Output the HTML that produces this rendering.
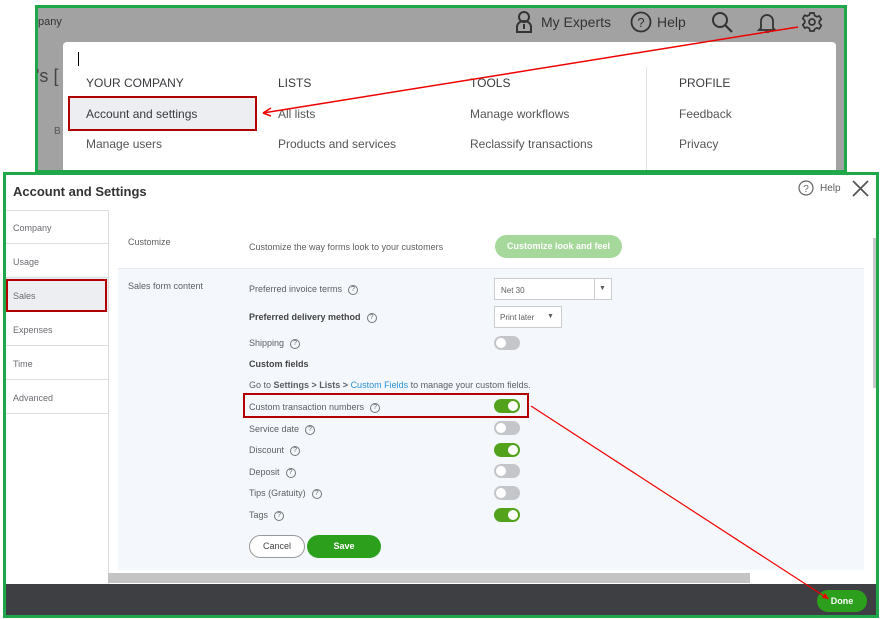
<!DOCTYPE html>
<html><head><meta charset="utf-8">
<style>
*{margin:0;padding:0;box-sizing:border-box}
body{width:881px;height:619px;background:#fff;position:relative;overflow:hidden;font-family:"Liberation Sans",sans-serif;color:#393a3d}
.a{position:absolute}
.t{font-size:12px;color:#555;white-space:nowrap}
.s{font-size:9px;color:#5d5e60;white-space:nowrap}
.q{display:inline-block;width:10px;height:10px;border:1px solid #777;border-radius:50%;font-size:7px;line-height:8px;text-align:center;color:#666;margin-left:6px;vertical-align:middle}
.tg{position:absolute;width:26px;height:14px;border-radius:7px;background:#c5c6c9}
.tg::after{content:"";position:absolute;top:2px;left:2px;width:10px;height:10px;border-radius:50%;background:#fff}
.tg.on{background:#52a21c}
.tg.on::after{left:14px}
.nav{position:absolute;left:6px;width:102px;height:34px;border-bottom:1px solid #ddd;font-size:9px;color:#6b6c72;padding:13px 0 0 7px}
</style></head><body>
<!-- top screenshot -->
<div class="a" style="left:35px;top:5px;width:812px;height:168px;background:#a2a2a2;border:3px solid #1fa84a"></div>
<div class="a t" style="left:38px;top:16px;color:#333;font-size:11px">pany</div>
<div class="a" style="left:36px;top:66px;font-size:18px;color:#444">'s [</div>
<div class="a" style="left:54px;top:126px;font-size:10px;color:#555">B</div>
<svg class="a" style="left:514px;top:10px" width="20" height="24" viewBox="0 0 20 24"><circle cx="10" cy="7" r="5" fill="none" stroke="#333" stroke-width="2"/><path d="M3 22v-5a7 6 0 0 1 14 0v5z" fill="none" stroke="#333" stroke-width="2"/><path d="M10 14v5" stroke="#333" stroke-width="2"/></svg>
<div class="a" style="left:541px;top:14px;font-size:14px;color:#333">My Experts</div>
<svg class="a" style="left:630px;top:11px" width="22" height="22"><circle cx="11" cy="11" r="9.5" fill="none" stroke="#333" stroke-width="1.8"/><text x="11" y="16" font-size="13" text-anchor="middle" fill="#333" font-family="Liberation Sans">?</text></svg>
<div class="a" style="left:657px;top:14px;font-size:14px;color:#333">Help</div>
<svg class="a" style="left:711px;top:11px" width="24" height="24"><circle cx="9" cy="9" r="7" fill="none" stroke="#333" stroke-width="2"/><path d="M14 14l7 7" stroke="#333" stroke-width="2.2"/></svg>
<svg class="a" style="left:757px;top:10px" width="20" height="24"><path d="M4 18V11a6 6 0 0 1 12 0v7l2 2H2z" fill="none" stroke="#333" stroke-width="1.8"/><path d="M8 22h4" stroke="#333" stroke-width="1.8"/></svg>
<svg class="a" style="left:801px;top:11px" width="22" height="22" viewBox="0 0 22 22"><path d="M9 2h4l.6 2.6 2.2 1.2 2.5-.9 2 3.4-2 1.8v2.5l2 1.8-2 3.4-2.5-.9-2.2 1.2L13 20H9l-.6-2.6-2.2-1.2-2.5.9-2-3.4 2-1.8V9.4l-2-1.8 2-3.4 2.5.9 2.2-1.2z" fill="none" stroke="#333" stroke-width="1.7" stroke-linejoin="round"/><circle cx="11" cy="11" r="3" fill="none" stroke="#333" stroke-width="1.7"/></svg>
<div class="a" style="left:63px;top:42px;width:773px;height:128px;background:#fff;border-radius:4px 4px 0 0"></div>
<div class="a" style="left:78px;top:52px;width:1px;height:14px;background:#000"></div>
<div class="a" style="left:646px;top:67px;width:1px;height:103px;background:#e3e3e3"></div>
<div class="a t" style="left:86px;top:76px;color:#393a3d">YOUR COMPANY</div>
<div class="a t" style="left:278px;top:76px;color:#393a3d">LISTS</div>
<div class="a t" style="left:470px;top:76px;color:#393a3d">TOOLS</div>
<div class="a t" style="left:679px;top:76px;color:#393a3d">PROFILE</div>
<div class="a" style="left:68px;top:97px;width:188px;height:33px;background:#eceef1"></div>
<div class="a t" style="left:86px;top:107px;color:#393a3d">Account and settings</div>
<div class="a t" style="left:278px;top:107px">All lists</div>
<div class="a t" style="left:470px;top:107px">Manage workflows</div>
<div class="a t" style="left:679px;top:107px">Feedback</div>
<div class="a t" style="left:86px;top:137px">Manage users</div>
<div class="a t" style="left:278px;top:137px">Products and services</div>
<div class="a t" style="left:470px;top:137px">Reclassify transactions</div>
<div class="a t" style="left:679px;top:137px">Privacy</div>
<div class="a" style="left:68px;top:96px;width:189px;height:35px;border:2px solid #b00000"></div>

<!-- bottom modal -->
<div class="a" style="left:3px;top:172px;width:876px;height:446px;background:#fff;border:3px solid #1fa84a"></div>
<div class="a" style="left:13px;top:184px;font-size:13px;font-weight:bold;color:#333">Account and Settings</div>
<svg class="a" style="left:798px;top:180px" width="16" height="16"><circle cx="8" cy="8" r="7" fill="none" stroke="#666" stroke-width="1.2"/><text x="8" y="12" font-size="10" text-anchor="middle" fill="#666" font-family="Liberation Sans">?</text></svg>
<div class="a s" style="left:820px;top:183px;font-size:10px">Help</div>
<svg class="a" style="left:852px;top:180px" width="17" height="17"><path d="M1 1l15 15M16 1L1 16" stroke="#555" stroke-width="1.8"/></svg>
<div class="a" style="left:6px;top:210px;width:102px;height:1px;background:#ddd"></div>
<div class="nav" style="top:210px">Company</div>
<div class="nav" style="top:244px">Usage</div>
<div class="nav" style="top:278px;background:#eceef1">Sales</div>
<div class="nav" style="top:312px">Expenses</div>
<div class="nav" style="top:346px">Time</div>
<div class="nav" style="top:380px">Advanced</div>
<div class="a" style="left:108px;top:210px;width:1px;height:374px;background:#ddd"></div>
<div class="a" style="left:6px;top:279px;width:101px;height:33px;border:2px solid #b00000"></div>

<div class="a s" style="left:128px;top:237px">Customize</div>
<div class="a s" style="left:249px;top:242px">Customize the way forms look to your customers</div>
<div class="a" style="left:495px;top:235px;width:127px;height:23px;border-radius:12px;background:#a5d89a;color:#fff;font-size:9px;font-weight:bold;text-align:center;line-height:23px">Customize look and feel</div>
<div class="a" style="left:118px;top:268px;width:746px;height:302px;background:#f4f8fc;border-top:1px solid #e1e8ef"></div>
<div class="a s" style="left:128px;top:281px">Sales form content</div>
<div class="a s" style="left:249px;top:284px">Preferred invoice terms<span class="q">?</span></div>
<div class="a" style="left:494px;top:278px;width:118px;height:22px;background:#fff;border:1px solid #ccc"></div>
<div class="a" style="left:594px;top:279px;width:1px;height:20px;background:#ccc"></div>
<div class="a s" style="left:501px;top:286px;font-size:8px">Net 30</div>
<div class="a s" style="left:599px;top:285px;font-size:7px">▼</div>
<div class="a s" style="left:249px;top:312px;font-weight:bold;color:#444">Preferred delivery method<span class="q" style="font-weight:normal">?</span></div>
<div class="a" style="left:494px;top:306px;width:68px;height:22px;background:#fff;border:1px solid #ccc"></div>
<div class="a s" style="left:500px;top:313px;font-size:8px">Print later</div>
<div class="a s" style="left:547px;top:313px;font-size:7px">▼</div>
<div class="a s" style="left:249px;top:338px">Shipping<span class="q">?</span></div>
<div class="tg" style="left:494px;top:336px"></div>
<div class="a s" style="left:249px;top:359px;font-weight:bold;color:#444">Custom fields</div>
<div class="a s" style="left:249px;top:380px">Go to <b>Settings &gt; Lists &gt;</b> <span style="color:#2b8fd6">Custom Fields</span> to manage your custom fields.</div>
<div class="a s" style="left:249px;top:402px">Custom transaction numbers<span class="q">?</span></div>
<div class="tg on" style="left:494px;top:399px"></div>
<div class="a" style="left:243px;top:393px;width:286px;height:25px;border:2px solid #b00000"></div>
<div class="a s" style="left:249px;top:424px">Service date<span class="q">?</span></div>
<div class="tg" style="left:494px;top:421px"></div>
<div class="a s" style="left:249px;top:445px">Discount<span class="q">?</span></div>
<div class="tg on" style="left:494px;top:443px"></div>
<div class="a s" style="left:249px;top:467px">Deposit<span class="q">?</span></div>
<div class="tg" style="left:494px;top:464px"></div>
<div class="a s" style="left:249px;top:488px">Tips (Gratuity)<span class="q">?</span></div>
<div class="tg" style="left:494px;top:486px"></div>
<div class="a s" style="left:249px;top:510px">Tags<span class="q">?</span></div>
<div class="tg on" style="left:494px;top:508px"></div>
<div class="a" style="left:249px;top:535px;width:56px;height:23px;border:1px solid #999;border-radius:12px;background:#fff;font-size:9px;text-align:center;line-height:21px;color:#444">Cancel</div>
<div class="a" style="left:307px;top:535px;width:74px;height:23px;border-radius:12px;background:#2ca01c;font-size:9px;font-weight:bold;text-align:center;line-height:23px;color:#fff">Save</div>
<div class="a" style="left:108px;top:573px;width:642px;height:10px;background:#c4c4c4"></div>
<div class="a" style="left:873px;top:238px;width:3px;height:150px;background:#c8c8c8"></div>
<div class="a" style="left:6px;top:584px;width:870px;height:31px;background:#3e3f42"></div>
<div class="a" style="left:817px;top:590px;width:50px;height:22px;border-radius:11px;background:#2ca01c;font-size:9px;font-weight:bold;text-align:center;line-height:22px;color:#fff">Done</div>

<svg class="a" style="left:0;top:0" width="881" height="619">
<path d="M798 27L263 113" stroke="#e00" stroke-width="1.5"/>
<path d="M263 113l8-5M263 113l8 3" stroke="#e00" stroke-width="1.5"/>
<path d="M531 406L827 598" stroke="#e00" stroke-width="1.2"/>
<path d="M829 599l-7-1 3-5z" fill="#e00"/>
</svg>
</body></html>
